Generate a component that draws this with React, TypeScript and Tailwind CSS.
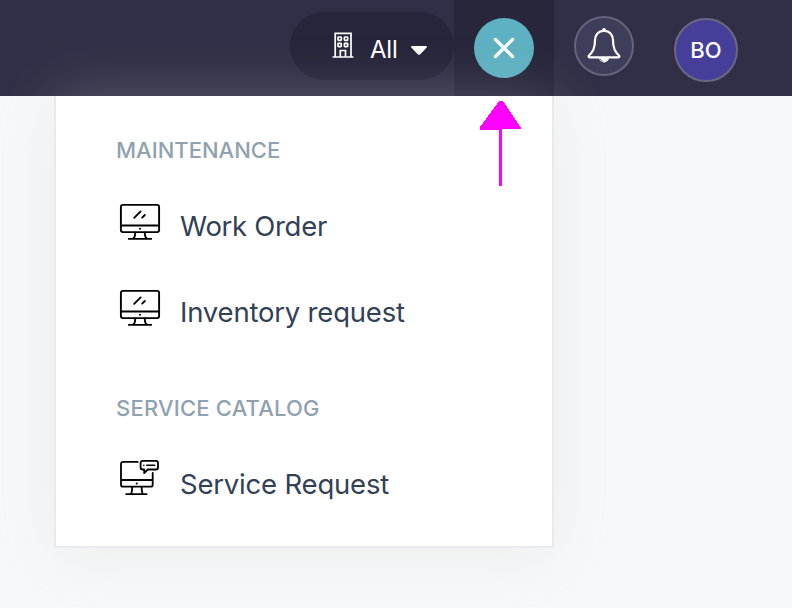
import React from "react";

function Monitor() {
  return (
    <svg className="h-10 w-11 shrink-0" viewBox="0 0 44 40" fill="none" stroke="#000" strokeWidth="1.9" strokeLinecap="round" strokeLinejoin="round">
      <rect x="2.9" y="2.9" width="38.2" height="27.2" rx="2" />
      <path d="M3 23.500h38M17.200 30.500c0 3-.4 4.800-1.600 5.600M26.800 30.500c0 3 .4 4.800 1.600 5.600M10.800 36.900h22.400" />
      <path d="M16.200 15.800l6.400-6.400M24.200 15.600l2.600-2.600" />
      <circle cx="22" cy="26.700" r="1" fill="#000" stroke="none" />
    </svg>
  );
}

function ServiceMonitor() {
  return (
    <svg className="h-10 w-11 shrink-0" viewBox="0 0 44 40" fill="none" stroke="#000" strokeWidth="1.8" strokeLinecap="round" strokeLinejoin="round">
      <path d="M19.700 3.900H5a2 2 0 0 0-2 2v20.800a2 2 0 0 0 2 2h27.700a2 2 0 0 0 2-2V15M3 22h31.500" />
      <path d="M14.200 29c0 3-.3 4.800-1 6.800M23.600 29c0 3 .3 4.800 1 6.800M8.200 36.200h20.400" />
      <path d="M24.600 2.900h13.400a2 2 0 0 1 2 2v4.600a2 2 0 0 1-2 2h-8.200l-3.600 3.500v-3.500h-1.600a2 2 0 0 1-2-2V4.900a2 2 0 0 1 2-2z" />
      <path d="M25.800 7.200h.1M28.800 7.200h7.800" strokeWidth="1.500" />
      <circle cx="18.800" cy="25.500" r="1.100" fill="#000" stroke="none" />
    </svg>
  );
}

function Building() {
  return (
    <svg className="h-[26px] w-[22px]" viewBox="0 0 22 26" fill="none" stroke="#fff" strokeWidth="1.700">
      <path d="M.5 25h21M3.200 25V1.300h15.800V25M8.300 25v-6.500h5.200V25" />
      <rect x="6" y="5" width="3.300" height="3.300" rx=".6" />
      <rect x="12.400" y="5" width="3.300" height="3.300" rx=".6" />
      <rect x="6" y="11.300" width="3.300" height="3.300" rx=".6" />
      <rect x="12.400" y="11.300" width="3.300" height="3.300" rx=".6" />
    </svg>
  );
}

function Bell() {
  return (
    <svg className="h-9 w-[34px]" viewBox="0 0 34 36" fill="none" stroke="#fff" strokeWidth="2.200" strokeLinejoin="round">
      <path d="M17 2.800c-5.600 0-9 4-9 9.500 0 7.700-1.600 11.700-6 15.200-.8.900-.4 1.800.6 1.800h28.800c1 0 1.400-.9.600-1.800-4.400-3.500-6-7.500-6-15.200 0-5.500-3.400-9.500-9-9.500z" />
      <circle cx="17" cy="2" r="1.900" fill="#fff" stroke="none" />
      <path d="M12 29.500h10a5 5 0 0 1-10 0z" fill="#fff" stroke="none" />
      <path d="M13.300 30.800c.3 1.400 1.200 2.200 2.500 2.600" stroke="#3f3e5a" strokeWidth=".8" />
    </svg>
  );
}

function Header() {
  return (
    <header className="flex h-24 bg-[#302f47]">
      <div className="ml-[290px] mt-3 flex h-[68px] w-[164px] items-center rounded-full bg-[#26253b] pl-[42px] text-white">
        <div className="-mt-0.5">
          <Building />
        </div>
        <span className="ml-4 mt-2 w-[27px] whitespace-nowrap text-[24px] leading-7 tracking-[-0.2px]">All</span>
        <svg className="ml-3.5 mt-2 h-[9px] w-4" viewBox="0 0 16 9" fill="#fff">
          <path d="M1.200 0h13.600c1 0 1.400 1 .7 1.700L9 8.400c-.6.600-1.400.6-2 0L.5 1.700C-.2 1 .2 0 1.200 0z" />
        </svg>
      </div>
      <div className="flex w-[100px] justify-center bg-[#27263b] pt-[18px]">
        <div className="flex size-[60px] items-center justify-center rounded-full bg-[#5eb1c2]">
          <svg className="size-6" viewBox="0 0 24 24" stroke="#fff" strokeWidth="3.200" strokeLinecap="round">
            <path d="M3.500 3.500l17 17M20.500 3.500l-17 17" />
          </svg>
        </div>
      </div>
      <div className="ml-5 mt-4 flex size-[60px] items-center justify-center rounded-full border-2 border-[#65647c] bg-[#3f3e5a]">
        <Bell />
      </div>
      <div className="ml-10 mt-[18px] flex size-16 items-center justify-center rounded-full border-2 border-[#6a6980] bg-[#453f9a] text-[22px] font-medium text-white">
        BO
      </div>
    </header>
  );
}

function Item({ icon, children }: { icon: React.ReactNode; children: React.ReactNode }) {
  return (
    <div className="flex h-10 pl-0.5">
      {icon}
      <div className="ml-[18px] text-[27.5px] leading-10 text-[#334155]">{children}</div>
    </div>
  );
}

export default function App() {
  return (
    <div className="h-[608px] w-[792px] overflow-hidden bg-[#f7f8fa] font-['Inter','Liberation_Sans',sans-serif]">
      <Header />
      <main className="relative ml-[54px] h-[452px] w-[500px] border-2 border-t-0 border-[#e9eaee] bg-white pl-[60px] pt-10 shadow-[0_4px_56px_rgba(208,211,206,0.3)]">
        <h2 className="h-7 text-[22px] font-medium leading-7 text-[#90a2b0]">
          <span>MAINTENANCE</span>
        </h2>
        <div className="mt-[38px]">
          <Item icon={<Monitor />}><span className="block pt-1 tracking-[-0.3px]">Work Order</span></Item>
        </div>
        <div className="mt-[46px]">
          <Item icon={<Monitor />}><span className="block pt-1 tracking-[-0.2px]">Inventory request</span></Item>
        </div>
        <h2 className="mt-[66px] h-7 text-[22px] font-medium leading-7 text-[#90a2b0]">
          <span className="tracking-[0.2px]">SERVICE CATALOG</span>
        </h2>
        <div className="mt-9">
          <Item icon={<ServiceMonitor />}><span className="block pt-1.5 tracking-[-0.2px]">Service Request</span></Item>
        </div>
        <svg className="absolute left-[424px] top-1 h-[87px] w-[42px]" viewBox="0 0 42 87" fill="#ff00ff" shapeRendering="crispEdges">
          <path d="M19.500.5h3L41 28v1H22v57h-3V29.500H0V27z" />
        </svg>
      </main>
    </div>
  );
}
